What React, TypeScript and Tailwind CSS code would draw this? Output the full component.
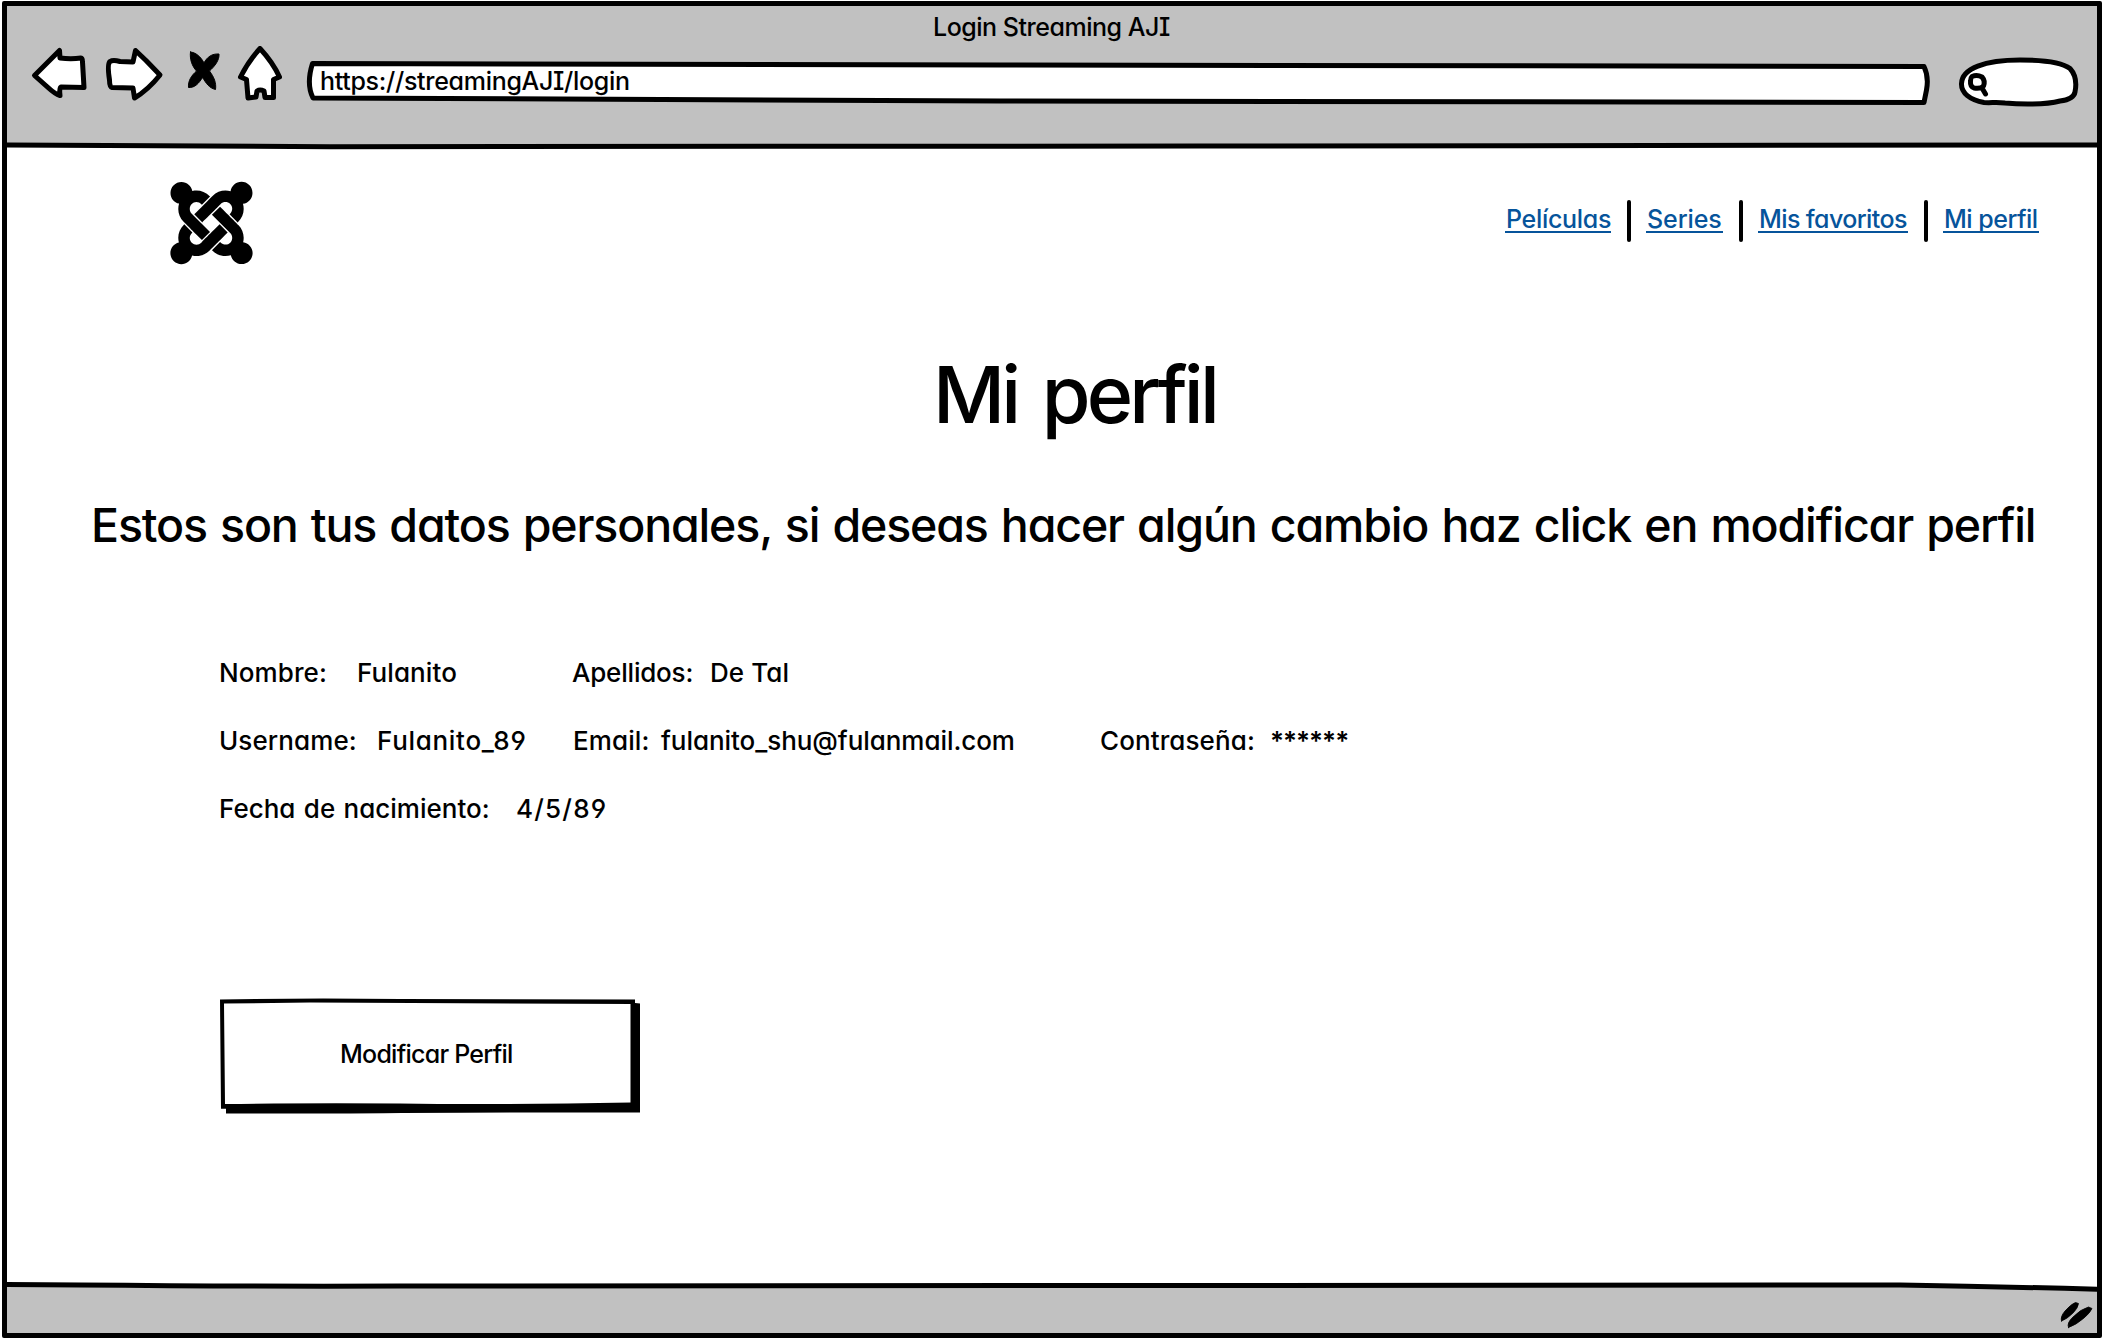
import type { ReactNode } from 'react';
import { FaJoomla } from 'react-icons/fa';

function Sketch({ box, className, children }: { box: string; className: string; children: ReactNode }) {
  return (
    <svg
      viewBox={box}
      className={className}
      fill="white"
      stroke="black"
      strokeWidth={5}
      strokeLinejoin="round"
      strokeLinecap="round"
      preserveAspectRatio="none"
      aria-hidden="true"
    >
      {children}
    </svg>
  );
}

function Toolbar() {
  return (
    <div className="flex h-16 items-start pl-[21px]">
      <Sketch box="28 46 64 64" className="h-16 w-16">
        <path d="M34.500 75.500 L59.500 50.500 L60 58 Q71 59.500 81 58 Q82.500 58 82.500 62 L84 87.500 L61 87 Q59 88 60 95.500 Q55 94 48 87.500 Z" />
      </Sketch>
      <Sketch box="102 46 64 64" className="ml-2.5 h-16 w-16">
        <path d="M110 61.500 Q113 59.500 120 61.500 L133 62 L135.500 50.500 L146 60.500 L160 75 Q148 90 134.500 98 L133 88 L112 87.500 Q109.500 87 109.500 80 Q107 64 110 61.500 Z" />
      </Sketch>
      <Sketch box="184 46 40 64" className="ml-[18px] h-16 w-10">
        <path
          d="M190.500 52 C196 52.500 201 57 204 63 C207 57 212 53.500 219 54 C219.500 60 215 66 209.500 71 C214 77 216.500 83 215.500 89.500 C209 88 206 83 202.500 77.500 C199 83 195 88 188.500 87.500 C188 81 191 76 196.500 71 C192 66 189.500 59 190.500 52Z"
          fill="black"
          strokeWidth={1}
        />
      </Sketch>
      <Sketch box="234 46 52 64" className="ml-2.5 h-16 w-[52px]">
        <path d="M260 48.500 C266 55 275 67 279.500 77 L273.500 79.500 L273.500 97.500 L265 97.500 L264 91 Q260 89 257 91 L256 97 L248 98 L246.500 79.500 L240.500 77 C246 66 254 55 260 48.500 Z" />
      </Sketch>
      <div className="relative ml-[18px] flex h-16 w-[1632px] items-center pt-1.5 pl-4">
        <Sketch box="304 46 1632 64" className="absolute inset-0 h-16 w-[1632px]">
          <path d="M312.500 63.500 Q700 63.500 1000 65 L1924 66.500 Q1929 77 1926.500 90 L1924 102.500 Q1500 103.500 1000 101 L313 98 Q306 84 312.500 63.500 Z" />
        </Sketch>
        <span className="relative text-[25px] leading-none tracking-[-0.3px] [font-feature-settings:'cv08','cv11']">
          https://streamingAJI/login
        </span>
      </div>
      <Sketch box="1952 46 134 64" className="ml-4 h-16 w-[134px]">
        <path d="M1961.500 83.500 C1962 68.500 1985 60 2020 60 C2045 60 2062 62.500 2070 68.500 C2075 74 2077 82 2075 92 C2074 98 2068 100 2060 101 C2045 105 2020 104.500 2005 103 C1998 102 1990 103 1984 102.500 C1970 100 1961 93 1961.500 83.500Z" />
        <path d="M1972 76.500 Q1977 74.500 1982 77 Q1985.500 81 1983.500 86 Q1981 89 1974 88 Q1970 86.500 1970.500 81 Q1970.500 78 1972 76.500 Z M1982 88 L1985.500 94" />
      </Sketch>
    </div>
  );
}

function NavLink({ className, children }: { className: string; children: string }) {
  return (
    <a
      href="#"
      className={`block h-[30px] border-b-2 border-[#06549b] pl-px text-[25px] leading-8 text-[#06549b] ${className}`}
    >
      {children}
    </a>
  );
}

function Divider() {
  return <span className="mr-[15px] ml-4 h-[42px] w-1 rounded-sm bg-black" />;
}

function Cell({ className, children }: { className: string; children: string }) {
  return <span className={`block ${className}`}>{children}</span>;
}

export default function App() {
  return (
    <div className="h-[1340px] w-[2104px] overflow-hidden bg-white pt-px pl-0.5 font-['Inter',sans-serif] font-[450] whitespace-nowrap text-black [font-feature-settings:'cv04','cv11']">
      <div className="flex h-[1337px] w-[2100px] flex-col rounded-[2px] border-5 border-black">
        <header className="relative h-[142px] shrink-0 bg-[#c1c1c1]">
          <div className="flex h-[42px] items-center pl-[926px] text-[25px] leading-none tracking-[-0.48px] [font-feature-settings:'cv08','cv11']">
            Login Streaming AJI
          </div>
          <div className="-mt-0.5">
            <Toolbar />
          </div>
          <Sketch box="7 138 2090 14" className="absolute bottom-[-4px] left-0 h-3.5 w-[2090px]">
            <path d="M0 145 Q150 145.500 330 146.700 Q900 147 1200 146 T2104 145 V154 H0 Z" stroke="none" />
            <path d="M0 145 Q150 145.500 330 146.700 Q900 147 1200 146 T2104 145" fill="none" />
          </Sketch>
        </header>

        <main className="flex-1">
          <div className="flex h-[186px] items-start justify-between pr-[58px] pl-[163px]">
            <FaJoomla className="mt-7 h-[94px] w-[83px]" />
            <nav className="mt-[52px] flex">
              <NavLink className="mt-[3px] w-[106px] tracking-[-0.3px]">Películas</NavLink>
              <Divider />
              <NavLink className="mt-[3px] w-[77px] tracking-[-0.1px]">Series</NavLink>
              <Divider />
              <NavLink className="mt-[3px] w-[150px] tracking-[-0.6px]">Mis favoritos</NavLink>
              <Divider />
              <NavLink className="mt-[3px] w-24 tracking-[-0.5px]">Mi perfil</NavLink>
            </nav>
          </div>

          <h1 className="flex h-[120px] items-center pl-[926px] text-[79px] leading-none font-medium tracking-[-3.8px] [word-spacing:7px]">
            Mi perfil
          </h1>
          <p className="flex h-[142px] items-center pl-[84px] text-[46.5px] leading-none tracking-[-1.15px] [word-spacing:1.9px]">
            Estos son tus datos personales, si deseas hacer algún cambio haz click en modificar perfil
          </p>

          <section className="mt-[42px] pl-[212px] text-[26px] tracking-[0.1px]">
            <div className="flex h-[68px] items-center">
              <Cell className="w-[138px]">Nombre:</Cell>
              <Cell className="w-[215px]">Fulanito</Cell>
              <Cell className="w-[138px] tracking-[-0.2px]">Apellidos:</Cell>
              <Cell className="w-[90px]">De Tal</Cell>
            </div>
            <div className="flex h-[68px] items-center">
              <Cell className="w-[158px]">Username:</Cell>
              <Cell className="w-[196px] tracking-[0.7px]">Fulanito_89</Cell>
              <Cell className="w-[88px]">Email:</Cell>
              <Cell className="w-[439px] tracking-[-0.05px]">fulanito_shu@fulanmail.com</Cell>
              <Cell className="w-[170px]">Contraseña:</Cell>
              <Cell className="w-[90px] font-semibold tracking-[-1px]">******</Cell>
            </div>
            <div className="flex h-[68px] items-center">
              <Cell className="w-[297px] tracking-[0px] [word-spacing:1.5px]">Fecha de nacimiento:</Cell>
              <Cell className="w-[100px] tracking-[1.2px]">4/5/89</Cell>
            </div>
          </section>

          <button
            type="button"
            className="relative mt-[155px] ml-[211px] flex h-[118px] w-[424px] items-center pb-[3px] pl-[122px] text-[25px] leading-none tracking-[-0.75px]"
          >
            <Sketch box="218 997 424 118" className="absolute inset-0 h-[118px] w-[424px]">
              <path d="M226 1004 L635 1003 L640 1003.500 L640 1112.500 Q450 1112 350 1113.500 L226 1113.500 L226 1108.500 L221 1108.500 Z" fill="black" stroke="none" />
              <path d="M220 999.500 Q300 998 400 999 L635 999.500 L635 1108.500 L221 1108.500 Z" fill="black" stroke="none" />
              <path d="M224 1003.500 L310 1002.500 L630.500 1004 L630.500 1102.500 Q500 1105 400 1103.500 Q300 1103 225 1104 Z" stroke="none" />
            </Sketch>
            <span className="relative">Modificar Perfil</span>
          </button>
        </main>

        <footer className="relative flex h-[50px] shrink-0 items-start justify-end bg-[#c1c1c1]">
          <Sketch box="7 1278 2090 16" className="absolute top-[-5px] left-0 h-4 w-[2090px]">
            <path d="M0 1276 H2104 V1289 Q2000 1286.500 1900 1285 Q1000 1284 400 1286 L0 1284.500 Z" stroke="none" />
            <path d="M0 1284.500 L80 1285 Q250 1286.500 400 1286 Q1000 1284 1900 1285 Q2000 1286.500 2104 1289.500" fill="none" />
          </Sketch>
          <Sketch box="2057 1298 40 34" className="mt-[15px] h-[34px] w-10">
            <path d="M2061.500 1321 Q2060 1317 2065 1311 Q2071 1304 2075.500 1302.500 L2078.500 1303.500 Q2078 1308 2073 1313 Q2067 1319 2061.500 1321 Z" fill="black" strokeWidth={0.8} />
            <path d="M2068.500 1327.500 Q2066.500 1323 2073 1317 Q2081 1309 2088.500 1307 L2092 1308.500 Q2090 1313 2084 1318 Q2076 1325 2068.500 1327.500 Z" fill="black" strokeWidth={0.8} />
          </Sketch>
        </footer>
      </div>
    </div>
  );
}
